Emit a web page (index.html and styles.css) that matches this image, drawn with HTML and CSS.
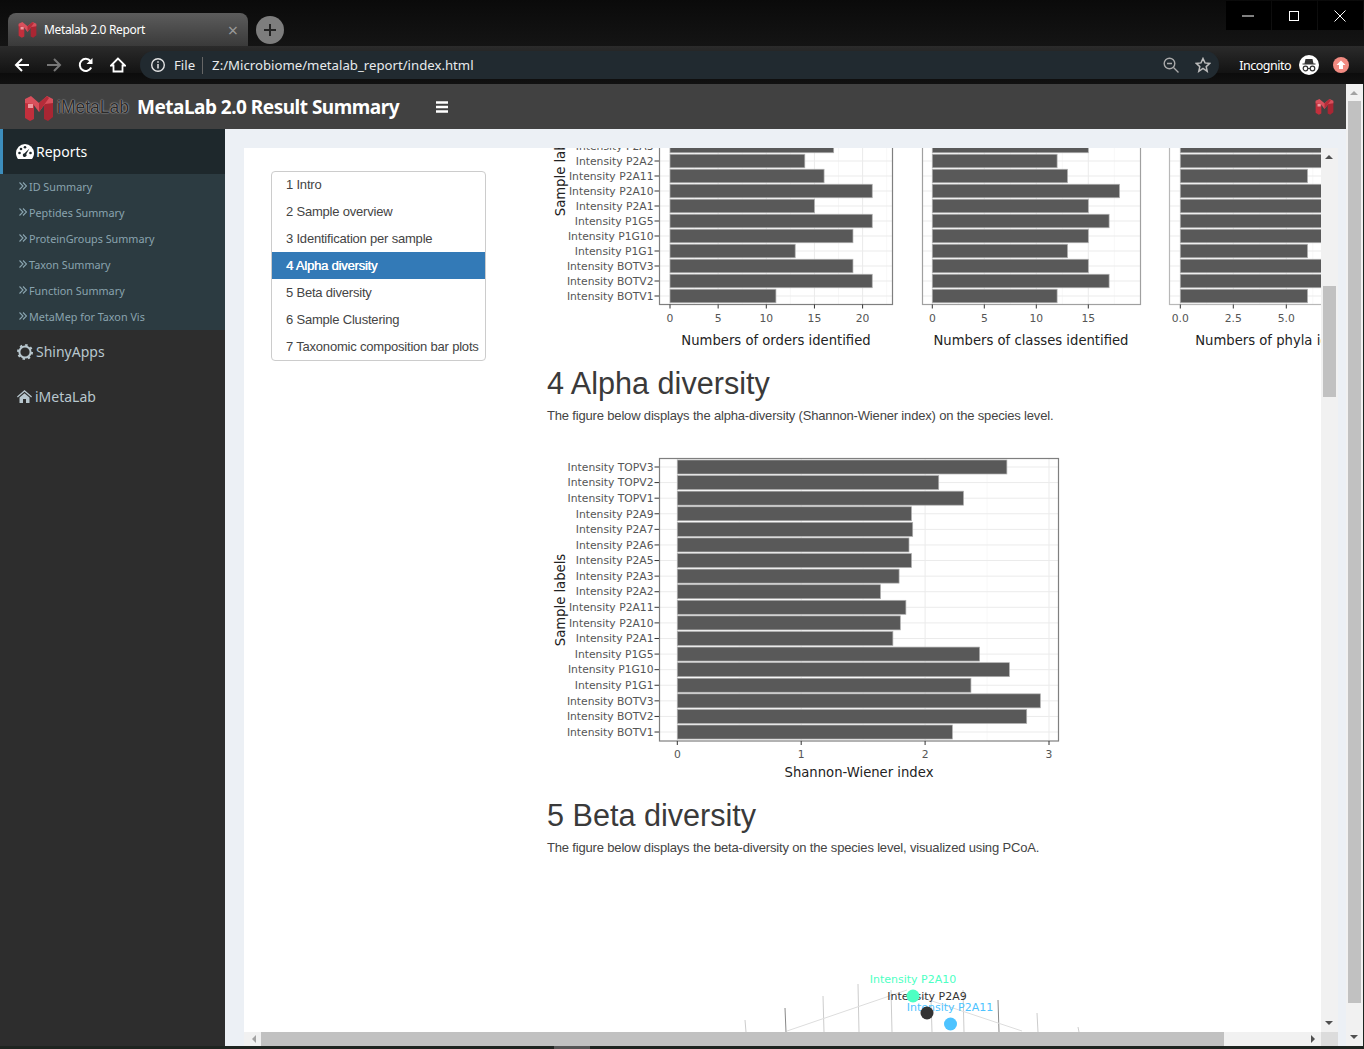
FILE: index.html
```html
<!DOCTYPE html>
<html>
<head>
<meta name="viewport" content="width=device-width, initial-scale=1">
<title>Metalab 2.0 Report</title>
<link rel="stylesheet" href="styles.css">
</head>
<body>

<svg class="defs" width="0" height="0">
  <symbol id="mlogo" viewBox="0 0 30 26">
    <polygon points="1,5 10,5 10,24 6,26 1,23" fill="#c22f3c"/>
    <polygon points="20,5 29,5 29,22 24,26 20,24" fill="#a92633"/>
    <polygon points="1,4 7,1 15,8 23,1 29,4 29,8 21,9 15,17 9,9 1,8" fill="#d8505c"/>
    <polygon points="4,9 9,9 9,13 4,13" fill="#ee9aa0"/>
    <polygon points="15,8 23,1 25,3 15,17" fill="#b52c39"/>
  </symbol>
  <symbol id="chev" viewBox="0 0 8 8">
    <path d="M.5 .5L4 4 .5 7.500M4 .5L7.500 4 4 7.500" fill="none" stroke="#8aa4af" stroke-width="1.100"/>
  </symbol>
</svg>

<div class="tabstrip">
  <div class="tab">
    <svg class="tab-icon"><use href="#mlogo"/></svg>
    <span class="tab-title">Metalab 2.0 Report</span>
    <span class="tab-close">&#215;</span>
  </div>
  <div class="newtab">
    <svg width="14" height="14" viewBox="0 0 14 14"><path d="M7 1v12M1 7h12" stroke="#222" stroke-width="2"/></svg>
  </div>
  <div class="winbtns">
    <div class="winbtn"><svg width="14" height="14" viewBox="0 0 14 14"><path d="M1 7h12" stroke="#fff" stroke-width="1"/></svg></div>
    <div class="winbtn"><svg width="14" height="14" viewBox="0 0 14 14"><rect x="2.5" y="2.5" width="9" height="9" fill="none" stroke="#fff"/></svg></div>
    <div class="winbtn"><svg width="14" height="14" viewBox="0 0 14 14"><path d="M1.5 1.5l11 11M12.5 1.5l-11 11" stroke="#fff"/></svg></div>
  </div>
</div>

<div class="toolbar">
  <svg class="navicon" viewBox="0 0 16 16"><path d="M15 8H2M8 2L2 8l6 6" fill="none" stroke="#fff" stroke-width="2"/></svg>
  <svg class="navicon" viewBox="0 0 16 16"><path d="M1 8h13M8 2l6 6-6 6" fill="none" stroke="#777" stroke-width="2"/></svg>
  <svg class="navicon" viewBox="0 0 16 16"><path d="M13.2 10.5A6 6 0 1 1 12.4 4" fill="none" stroke="#fff" stroke-width="2"/><path d="M14.5 1v6h-6z" fill="#fff"/></svg>
  <svg class="navicon" viewBox="0 0 16 16"><path d="M8 1.5L1 8.5h2.5v6h9v-6H15z" fill="none" stroke="#fff" stroke-width="1.8"/></svg>
  <div class="omnibox">
    <svg width="16" height="16" viewBox="0 0 16 16"><circle cx="8" cy="8" r="6.3" fill="none" stroke="#e4e4e4" stroke-width="1.4"/><path d="M8 7v4.5M8 4.2v1.6" stroke="#e4e4e4" stroke-width="1.5"/></svg>
    <span class="omni-file">File</span>
    <span class="omni-url">Z:/Microbiome/metalab_report/index.html</span>
    <svg class="omni-zoom" width="16" height="16" viewBox="0 0 16 16"><circle cx="6.5" cy="6.5" r="5.3" fill="none" stroke="#aaa" stroke-width="1.4"/><path d="M10.5 10.5l5 5M4 6.5h5" stroke="#aaa" stroke-width="1.4"/></svg>
    <svg class="omni-star" width="16" height="16" viewBox="0 0 16 16"><path d="M8 1.5l2 4.4 4.8.5-3.6 3.2 1 4.7L8 11.4l-4.2 2.9 1-4.7L1.200 6.400l4.800-.5z" fill="none" stroke="#bbb" stroke-width="1.5"/></svg>
  </div>
  <span class="incognito">Incognito</span>
  <svg class="incog-icon" width="20" height="20" viewBox="0 0 20 20"><circle cx="10" cy="10" r="10" fill="#fff"/><path d="M6.500 4h7l1 4.500h2v1H3.500v-1h2z" fill="#333"/><circle cx="6.500" cy="13.500" r="2.300" fill="none" stroke="#333" stroke-width="1.200"/><circle cx="13.500" cy="13.500" r="2.300" fill="none" stroke="#333" stroke-width="1.200"/><path d="M8.800 13.500h2.400" stroke="#333"/></svg>
  <svg class="update-icon" width="16" height="16" viewBox="0 0 16 16"><circle cx="8" cy="8" r="8" fill="#f28b82"/><path d="M8 3.500L12.500 8H10v4H6V8H3.500z" fill="#fff"/></svg>
</div>

<div class="page">
  <div class="app">
    <header class="topbar">
      <svg class="logo-m"><use href="#mlogo"/></svg>
      <span class="logo-text">iMetaLab</span>
      <span class="app-title">MetaLab 2.0 Result Summary</span>
      <svg class="burger" width="12" height="12" viewBox="0 0 12 12"><path d="M0 1.500h12M0 6h12M0 10.500h12" stroke="#fff" stroke-width="2.400"/></svg>
      <svg class="topbar-m"><use href="#mlogo"/></svg>
    </header>

    <div class="app-body">
      <aside class="sidebar">
        <div class="side-active">
          <svg width="18" height="15" viewBox="0 0 18 15"><path d="M9 0a9 9 0 0 1 9 9c0 2.300-.8 4.300-2 6H2c-1.200-1.700-2-3.700-2-6a9 9 0 0 1 9-9z" fill="#fff"/><g fill="#1e282c"><circle cx="3.500" cy="9" r="1.300"/><circle cx="5" cy="5" r="1.300"/><circle cx="9" cy="3.300" r="1.300"/><circle cx="14.500" cy="9" r="1.300"/><path d="M13.500 4.500l-3.200 5.600a1.900 1.900 0 1 1-1.800-.9z"/></g></svg>
          <span>Reports</span>
        </div>
        <ul class="side-sub">
          <li><svg class="chev"><use href="#chev"/></svg>ID Summary</li>
          <li><svg class="chev"><use href="#chev"/></svg>Peptides Summary</li>
          <li><svg class="chev"><use href="#chev"/></svg>ProteinGroups Summary</li>
          <li><svg class="chev"><use href="#chev"/></svg>Taxon Summary</li>
          <li><svg class="chev"><use href="#chev"/></svg>Function Summary</li>
          <li><svg class="chev"><use href="#chev"/></svg>MetaMep for Taxon Vis</li>
        </ul>
        <div class="side-item side-shiny">
          <svg width="16" height="16" viewBox="0 0 16 16"><circle cx="8" cy="8" r="5.600" fill="none" stroke="#b8c7ce" stroke-width="2"/><circle cx="8" cy="8" r="7" fill="none" stroke="#b8c7ce" stroke-width="2" stroke-dasharray="2.400 3.100"/></svg>
          <span>ShinyApps</span>
        </div>
        <div class="side-item side-home">
          <svg width="15" height="13" viewBox="0 0 15 13"><path d="M7.500 0L15 6.500l-.8 1-6.700-5.700L.8 7.500 0 6.500z" fill="#b8c7ce"/><path d="M2.500 7.500l5-4.300 5 4.300V13H9V9H6v4H2.500z" fill="#b8c7ce"/></svg>
          <span>iMetaLab</span>
        </div>
      </aside>

      <main class="content">
        <div class="report">
          <div class="scrollarea">
            <ul class="toc">
              <li>1 Intro</li>
              <li>2 Sample overview</li>
              <li>3 Identification per sample</li>
              <li class="toc-active">4 Alpha diversity</li>
              <li>5 Beta diversity</li>
              <li>6 Sample Clustering</li>
              <li>7 Taxonomic composition bar plots</li>
            </ul>
            <div class="doc">
              <div id="chartTop" class="chart chart-top"></div>
              <h2>4 Alpha diversity</h2>
              <p>The figure below displays the alpha-diversity (Shannon-Wiener index) on the species level.</p>
              <div id="chartAlpha" class="chart chart-alpha"></div>
              <h2>5 Beta diversity</h2>
              <p>The figure below displays the beta-diversity on the species level, visualized using PCoA.</p>
              <div id="chartBeta" class="chart chart-beta"></div>
            </div>
          </div>
          <div class="vbar">
            <span class="arrow-up"></span>
            <div class="vbar-thumb"></div>
            <span class="arrow-down"></span>
          </div>
          <div class="hbar">
            <span class="arrow-left"></span>
            <div class="hbar-thumb"></div>
            <span class="arrow-right"></span>
          </div>
          <div class="corner"></div>
        </div>
      </main>
    </div>
  </div>

  <div class="pagebar">
    <span class="arrow-up"></span>
    <div class="pagebar-thumb"></div>
    <span class="arrow-down"></span>
  </div>
</div>

<div class="taskstrip"><div class="taskstrip-item"></div></div>

<script src="charts.js"></script>
</body>
</html>
```

FILE: styles.css
```css
* {
  box-sizing: border-box;
}

html, body {
  margin: 0;
  width: 1364px;
  height: 1049px;
  overflow: hidden;
  background: #1c2420;
}

.defs {
  display: block;
  height: 0;
}

/* browser chrome */
.tabstrip {
  height: 46px;
  display: flex;
  background: linear-gradient(#0a0a0a, #141414);
}

.tab {
  width: 240px;
  height: 33px;
  margin: 13px 0 0 8px;
  padding: 0 10px;
  display: flex;
  align-items: center;
  border-radius: 8px 8px 0 0;
  background: linear-gradient(#5c5c5c, #3a3a3a);
  font: 12px "Noto Sans", sans-serif;
  color: #fff;
}

.tab-icon {
  width: 19px;
  height: 17px;
  flex: none;
}

.tab-title {
  margin-left: 7px;
  flex: 1;
  letter-spacing: -0.35px;
}

.tab-close {
  font-size: 18px;
  color: #999;
}

.newtab {
  width: 28px;
  height: 28px;
  margin: 16px 0 0 8px;
  border-radius: 50%;
  background: #7d7d7d;
  display: flex;
  align-items: center;
  justify-content: center;
}

.winbtns {
  margin-left: auto;
  margin-top: 1px;
  margin-right: 1px;
  height: 29px;
  display: flex;
  gap: 1px;
}

.winbtn {
  width: 45px;
  padding-right: 2px;
  background: #000;
  display: flex;
  align-items: center;
  justify-content: center;
}

.toolbar {
  height: 38px;
  padding: 5px 15px 5px 14px;
  display: flex;
  align-items: center;
  background: linear-gradient(#2b2b2b, #131313 70%, #0c0c0c 71%, #111);
}

.navicon {
  width: 16px;
  height: 16px;
  margin-right: 16px;
  flex: none;
}

.omnibox {
  width: 1080px;
  height: 28px;
  margin-left: -2px;
  padding: 0 8px 0 10px;
  display: flex;
  align-items: center;
  border-radius: 14px;
  background: #212a30;
  font: 13.2px "Noto Sans", sans-serif;
  color: #e8eaed;
}

.omni-file {
  margin-left: 8px;
  padding-right: 7px;
  border-right: 1px solid #666;
  line-height: 17px;
}

.omni-url {
  margin-left: 9px;
  flex: 1;
}

.omni-zoom {
  margin-right: 16px;
}

.incognito {
  margin-left: 20px;
  font: 12.5px "Noto Sans", sans-serif;
  letter-spacing: -0.5px;
  color: #fff;
}

.incog-icon {
  margin-left: 8px;
}

.update-icon {
  margin-left: 14px;
}

/* page */
.page {
  height: 962px;
  width: 1363px;
  display: flex;
}

.app {
  width: 1346px;
  display: flex;
  flex-direction: column;
}

.topbar {
  height: 45px;
  flex: none;
  padding-left: 24px;
  display: flex;
  align-items: center;
  background: #414141;
  color: #fff;
}

.logo-m {
  width: 30px;
  height: 26px;
  margin-top: 2px;
}

.logo-text {
  margin-left: 3px;
  padding-top: 2px;
  font: 17.500px "Liberation Sans", sans-serif;
  color: #2a2a2a;
  text-shadow: 0 0 1px #ccc, 0 0 2px #999;
}

.app-title {
  margin-left: 8px;
  font: bold 19px "Noto Sans", sans-serif;
  letter-spacing: -0.5px;
}

.burger {
  margin-left: 37px;
}

.topbar-m {
  width: 19px;
  height: 17px;
  margin-left: auto;
  margin-right: 12px;
}

.app-body {
  flex: 1;
  display: flex;
  min-height: 0;
}

.sidebar {
  width: 225px;
  flex: none;
  background: #2d2d2d;
  font-family: "Noto Sans", sans-serif;
}

.side-active {
  height: 45px;
  padding-left: 13px;
  display: flex;
  align-items: center;
  gap: 2px;
  border-left: 3px solid #3c8dbc;
  background: #1e282c;
  font-size: 14px;
  color: #fff;
}

.side-sub {
  list-style-type: none;
  margin: 0;
  padding: 0 0 0 1px;
  height: 156px;
  background: #2c3b41;
}

.side-sub li {
  height: 26px;
  padding: 0 0 2px 18px;
  display: flex;
  align-items: center;
  font-size: 10.800px;
  color: #8aa4af;
}

.chev {
  width: 8px;
  height: 8px;
  margin-right: 2px;
  flex: none;
}

.side-item {
  display: flex;
  align-items: center;
  gap: 3px;
  padding-left: 17px;
  font-size: 14px;
  color: #b8c7ce;
}

.side-shiny {
  height: 43px;
}

.side-home {
  height: 46px;
}

.content {
  flex: 1;
  min-width: 0;
  padding: 19px 8px 0 19px;
  background: #ecf0f5;
}

.report {
  height: 100%;
  display: grid;
  grid-template-columns: 1fr 17px;
  grid-template-rows: 1fr 14px;
  background: #fff;
}

.scrollarea {
  display: flex;
  overflow: hidden;
  min-width: 0;
  min-height: 0;
}

.toc {
  list-style-type: none;
  width: 215px;
  height: 190px;
  flex: none;
  margin: 23px 0 0 27px;
  padding: 0;
  border: 1px solid #ccc;
  border-radius: 4px;
  font: 13px/27px "Liberation Sans", sans-serif;
  letter-spacing: -0.2px;
  color: #444;
}

.toc li {
  height: 27px;
  padding-left: 14px;
  white-space: nowrap;
}

.toc li:first-child {
  margin-top: -1px;
}

.toc .toc-active {
  background: #337ab7;
  color: #fff;
  text-shadow: 0.4px 0 0 #fff;
}

.doc {
  margin-left: 61px;
  flex: 1;
  min-width: 0;
  font-family: "Liberation Sans", sans-serif;
  color: #333;
}

.doc h2 {
  margin: 13px 0 0;
  font-size: 30.600px;
  font-weight: normal;
  line-height: 34px;
  color: #3a3a3a;
}

.doc p {
  margin: 6px 0 0;
  font-size: 13px;
  line-height: 20px;
  letter-spacing: -0.17px;
  color: #444;
}

.chart svg {
  display: block;
}

.chart-alpha {
  margin-top: 19px;
}

.chart-beta {
  margin-top: 102px;
}

.tick-label {
  font: 10.750px "DejaVu Sans", sans-serif;
  fill: #555;
}

.axis-title {
  font: 13.200px "DejaVu Sans", sans-serif;
  fill: #222;
}

.point-label {
  font: 11px "DejaVu Sans", sans-serif;
}

/* scrollbars */
.vbar, .pagebar {
  position: relative;
  background: #f1f1f1;
}

.vbar-thumb {
  position: absolute;
  left: 2px;
  top: 138px;
  width: 13px;
  height: 111px;
  background: #c1c1c1;
}

.hbar {
  position: relative;
  background: #f1f1f1;
}

.hbar-thumb {
  position: absolute;
  left: 17px;
  top: 0;
  width: 963px;
  height: 14px;
  background: #c1c1c1;
}

.corner {
  background: #dcdcdc;
}

.pagebar {
  width: 17px;
  flex: none;
}

.pagebar-thumb {
  position: absolute;
  left: 2px;
  top: 17px;
  width: 13px;
  height: 902px;
  background: #c1c1c1;
}

.arrow-up, .arrow-down, .arrow-left, .arrow-right {
  position: absolute;
  width: 0;
  height: 0;
  border: 4px solid transparent;
}

.arrow-up {
  left: 4px;
  top: 3px;
  border-bottom-color: #505050;
}

.arrow-down {
  left: 4px;
  bottom: 3px;
  border-top-color: #505050;
}

.arrow-left {
  left: 4px;
  top: 3px;
  border-right-color: #a3a3a3;
}

.arrow-right {
  right: 2px;
  top: 3px;
  border-left-color: #505050;
}

.pagebar .arrow-up {
  border-bottom-color: #a3a3a3;
}

.taskstrip {
  height: 3px;
  background: #1e2420;
}

.taskstrip-item {
  width: 36px;
  height: 3px;
  margin-left: 554px;
  background: #555;
}
```

FILE: charts.js
```js
// draws the plots as svg, coordinates are page pixels (viewBox = place on the page)
const names = ["TOPV3","TOPV2","TOPV1","P2A9","P2A7","P2A6","P2A5","P2A3","P2A2","P2A11","P2A10","P2A1","P1G5","P1G10","P1G1","BOTV3","BOTV2","BOTV1"];
const topNames = names.slice(7);

function barPlot(o) {
  let s = "";
  const ticks = o.ticks, unit = o.unit, x0 = o.x0;
  const xAt = v => x0 + v * unit;
  // grid
  for (let i = 0; i < ticks.length; i++) {
    s += `<line x1="${xAt(ticks[i])}" x2="${xAt(ticks[i])}" y1="${o.top}" y2="${o.bottom}" stroke="#ebebeb"/>`;
    const half = ticks[i] + o.tickStep / 2;
    if (xAt(half) < o.right) s += `<line x1="${xAt(half)}" x2="${xAt(half)}" y1="${o.top}" y2="${o.bottom}" stroke="#f2f2f2" stroke-width="0.6"/>`;
  }
  o.rows.forEach((r, i) => {
    const y = o.y0 + i * o.step;
    s += `<line x1="${o.left}" x2="${o.right}" y1="${y}" y2="${y}" stroke="#ebebeb"/>`;
  });
  // bars
  o.rows.forEach((r, i) => {
    const y = o.y0 + i * o.step;
    s += `<rect x="${x0}" y="${y - o.barH / 2}" width="${r[1] * unit}" height="${o.barH}" fill="#595959" stroke="#b0b0b0" stroke-width="0.7"/>`;
    if (o.labels) {
      s += `<line x1="${o.left - 5}" x2="${o.left}" y1="${y}" y2="${y}" stroke="#333"/>`;
      s += `<text class="tick-label" x="${o.left - 6}" y="${y}" dy="0.35em" text-anchor="end">Intensity ${r[0]}</text>`;
    }
  });
  s += `<rect x="${o.left}" y="${o.top}" width="${o.right - o.left}" height="${o.bottom - o.top}" fill="none" stroke="${o.border || "#7f7f7f"}" stroke-width="1.200"/>`;
  // x axis
  ticks.forEach(t => {
    s += `<line x1="${xAt(t)}" x2="${xAt(t)}" y1="${o.bottom}" y2="${o.bottom + 4}" stroke="#333"/>`;
    s += `<text class="tick-label" x="${xAt(t)}" y="${o.bottom + 17}" text-anchor="middle">${o.tickFmt ? t.toFixed(1) : t}</text>`;
  });
  s += `<text class="axis-title" x="${o.titleX}" y="${o.bottom + o.titleDy}" text-anchor="middle">${o.title}</text>`;
  if (o.labels) s += `<text class="axis-title" transform="translate(565 ${o.yTitle}) rotate(-90)" text-anchor="middle">Sample labels</text>`;
  return s;
}

function zip(list, vals) {
  return list.map((n, i) => [n, vals[i]]);
}

document.getElementById("chartTop").innerHTML =
  `<svg width="774" height="205" viewBox="547 148 774 205">` +
  barPlot({ left: 659.5, right: 892.5, top: 36, bottom: 304.5, x0: 670, unit: 9.63, y0: 146, step: 15, barH: 13.5,
    ticks: [0, 5, 10, 15, 20], tickStep: 5, labels: true, yTitle: 170, titleX: 776, titleDy: 40, title: "Numbers of orders identified",
    rows: zip(topNames, [17, 14, 16, 21, 15, 21, 19, 13, 19, 21, 11]) }) +
  barPlot({ left: 922.5, right: 1140.5, top: 36, bottom: 304.5, x0: 932.3, unit: 10.4, y0: 146, step: 15, barH: 13.5, border: "#a0a0a0",
    ticks: [0, 5, 10, 15], tickStep: 5, titleX: 1031, titleDy: 40, title: "Numbers of classes identified",
    rows: zip(topNames, [15, 12, 13, 18, 15, 17, 15, 13, 15, 17, 12]) }) +
  barPlot({ left: 1169.5, right: 1420, top: 36, bottom: 304.5, x0: 1180.3, unit: 21.2, y0: 146, step: 15, barH: 13.5, border: "#b8b8b8",
    ticks: [0, 2.5, 5], tickStep: 2.5, tickFmt: true, titleX: 1287, titleDy: 40, title: "Numbers of phyla identified",
    rows: zip(topNames, [8, 8, 6, 8, 8, 8, 8, 6, 8, 8, 6]) }) +
  `</svg>`;

document.getElementById("chartAlpha").innerHTML =
  `<svg width="774" height="340" viewBox="547 445 774 340">` +
  barPlot({ left: 659.5, right: 1058.5, top: 458.5, bottom: 741, x0: 677.3, unit: 123.9, y0: 467, step: 15.59, barH: 14,
    ticks: [0, 1, 2, 3], tickStep: 1, labels: true, yTitle: 600, titleX: 859, titleDy: 36, title: "Shannon-Wiener index",
    rows: zip(names, [2.66, 2.11, 2.31, 1.89, 1.9, 1.87, 1.89, 1.79, 1.64, 1.845, 1.8, 1.74, 2.44, 2.68, 2.37, 2.93, 2.82, 2.22]) }) +
  `</svg>`;

// only the top of the PCoA plot is in view
const spokes = [[745, 1020, "#ccc"], [785, 1008, "#888"], [823, 996, "#ccc"], [858, 984, "#ccc"], [891, 990, "#ccc"], [931, 1000, "#ccc"], [963, 990, "#ccc"], [998, 1000, "#888"], [1037, 1013, "#ccc"], [1078, 1027, "#ccc"]];
let beta = `<svg width="774" height="72" viewBox="547 960 774 72">`;
spokes.forEach(p => {
  beta += `<line x1="${p[0]}" x2="${p[0] + 1}" y1="${p[1]}" y2="1032" stroke="${p[2]}"/>`;
});
beta += `<path d="M787 1031L907 990M920 997L1022 1031" fill="none" stroke="#ddd"/>`;
beta += `<text class="point-label" x="927" y="1000" text-anchor="middle" fill="#333">Intensity P2A9</text>`;
beta += `<text class="point-label" x="913" y="983" text-anchor="middle" fill="#4dffc3">Intensity P2A10</text>`;
beta += `<text class="point-label" x="950" y="1011" text-anchor="middle" fill="#4dc3ff">Intensity P2A11</text>`;
beta += `<circle cx="913" cy="996" r="6.500" fill="#4dffc3"/>`;
beta += `<circle cx="927" cy="1013" r="6.500" fill="#333"/>`;
beta += `<circle cx="950.500" cy="1024" r="6.500" fill="#4dc3ff"/>`;
beta += `</svg>`;
document.getElementById("chartBeta").innerHTML = beta;
```
